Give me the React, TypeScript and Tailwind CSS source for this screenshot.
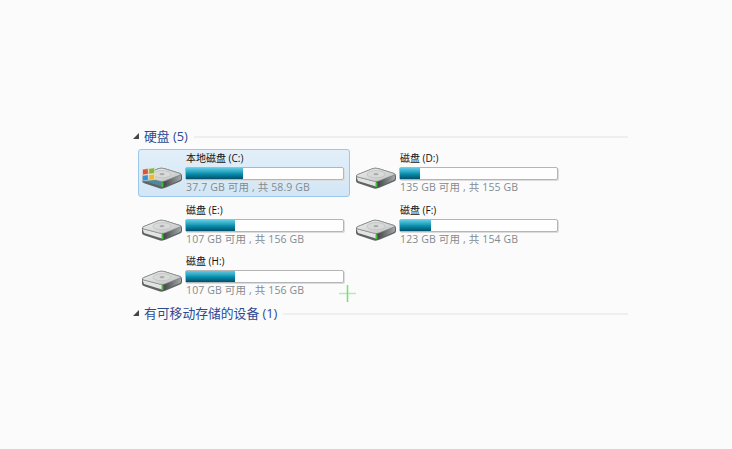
const font = '"Open Sans","Noto Sans CJK SC",sans-serif';

function Drive({ win = false }: { win?: boolean }) {
  return (
    <svg width="42" height="24" viewBox="0 0 42 24" className="block">
      <defs>
        <linearGradient id="hddTop" x1="0" y1="0" x2="1" y2="1">
          <stop offset="0" stopColor="#f0f0f0" />
          <stop offset="1" stopColor="#bfc1c1" />
        </linearGradient>
        <linearGradient id="hddRight" x1="0" y1="0" x2="1" y2="0">
          <stop offset="0" stopColor="#3f4343" />
          <stop offset="1" stopColor="#a4a8a8" />
        </linearGradient>
      </defs>
      <path d="M1 9 Q1 8 3 7 L18 1 Q20 0.5 23 1 L39 6 Q41 7 41 9 L41 12 Q41 13.5 39 14.5 L25 20.5 Q22 22 19 21.5 L4 16.5 Q1 15.5 1 14 Z" fill="#5f6363" />
      <path d="M1.5 10 L21 15 L21 19.5 L3 14 Z" fill={win ? "#4d8a98" : "#e2e3e3"} />
      <path d="M22 15 L40 8 L40 11.5 Q40 12.5 38.5 13.2 L24 19.8 L22 20.5 Z" fill="url(#hddRight)" />
      <path d="M1.5 8.8 Q1.5 8 3 7.5 L18 1.5 Q20 1 23 1.5 L39 6.5 Q40.5 7.3 39 8 L23.5 14 Q21.5 14.7 19 14.2 L3 10 Q1.5 9.5 1.5 8.8 Z" fill="url(#hddTop)" stroke="#8a8e8e" strokeWidth="0.6" />
      <ellipse cx="21" cy="7.2" rx="9" ry="3.6" fill="#d8dada" stroke="#aeb1b1" strokeWidth="0.5" />
      <ellipse cx="21" cy="7.2" rx="2.5" ry="1.1" fill="#a8acac" />
      <rect x="20.5" y="15.5" width="2" height="4.5" fill="#3fbf34" />
      {win && (
        <g transform="skewY(-7)">
          <rect x="1.5" y="2.5" width="5.8" height="5.6" fill="#d9572f" stroke="#f4f4f4" strokeWidth="0.5" />
          <rect x="7.8" y="2.5" width="5.8" height="5.6" fill="#85b53a" stroke="#f4f4f4" strokeWidth="0.5" />
          <rect x="1.5" y="8.6" width="5.8" height="5.6" fill="#3a8fd6" stroke="#f4f4f4" strokeWidth="0.5" />
          <rect x="7.8" y="8.6" width="5.8" height="5.6" fill="#eeb92e" stroke="#f4f4f4" strokeWidth="0.5" />
        </g>
      )}
    </svg>
  );
}

function Tile({ name, used, info, selected = false, win = false }: { name: string; used: number; info: string; selected?: boolean; win?: boolean }) {
  return (
    <div className={"flex w-[212px] h-[48px] items-start rounded-[3px] border pl-[2px] " + (selected ? "border-[#9cc6ea] bg-gradient-to-b from-[#e2eff9] to-[#d3e6f6]" : "border-transparent")}>
      <div className="w-[44px] pt-[17px]"><Drive win={win} /></div>
      <div className="w-[159px] flex flex-col">
        <div className="text-[10px] leading-[16px] pb-[1px] box-content text-[#111] pl-[1px]">{name}</div>
        <div className="h-[13px] border border-[#b3b5b6] rounded-[2px] bg-[#fefefe] shadow-[1px_1px_0_#dcdcdc]">
          <div className="h-full bg-gradient-to-b from-[#5ccbe2] via-[#0a94b2] to-[#03506c]" style={{ width: used + "%" }} />
        </div>
        <div className="text-[10.5px] leading-[14px] tracking-[0.14px] text-[#838b8f] pl-[1px]">{info}</div>
      </div>
    </div>
  );
}

function Header({ title }: { title: string }) {
  return (
    <div className="flex items-center h-[16px] pl-[133px] w-[628px]">
      <svg width="6" height="6" viewBox="0 0 6 6" className="mr-[5px] shrink-0"><path d="M6 0V6H0Z" fill="#444" /></svg>
      <span className="text-[12.8px] text-[#2c4a92] leading-[16px] shrink-0">{title}</span>
      <div className="h-[2px] bg-[#eeeff0] ml-[6px] mt-[2px] flex-1" />
    </div>
  );
}

export default function App() {
  return (
    <div className="w-[732px] h-[449px] bg-[#fbfbfc] pt-[128px] overflow-hidden relative" style={{ fontFamily: font }}>
      <Header title="硬盘 (5)" />
      <div className="ml-[138px] mt-[5px] w-[490px] grid grid-cols-[214px_1fr] gap-y-[3.5px]">
        <Tile name="本地磁盘 (C:)" used={36} info="37.7 GB 可用 , 共 58.9 GB" selected win />
        <Tile name="磁盘 (D:)" used={13} info="135 GB 可用 , 共 155 GB" />
        <Tile name="磁盘 (E:)" used={31} info="107 GB 可用 , 共 156 GB" />
        <Tile name="磁盘 (F:)" used={20} info="123 GB 可用 , 共 154 GB" />
        <Tile name="磁盘 (H:)" used={31} info="107 GB 可用 , 共 156 GB" />
      </div>
      <div className="mt-[5px]"><Header title="有可移动存储的设备 (1)" /></div>
      <svg width="17" height="17" viewBox="0 0 17 17" className="absolute left-[339px] top-[285px]">
        <path d="M0 8.5H17" stroke="#b5ecb0" strokeWidth="1.5" />
        <path d="M8.5 0V17" stroke="#6fe66a" strokeWidth="1.5" />
      </svg>
    </div>
  );
}
